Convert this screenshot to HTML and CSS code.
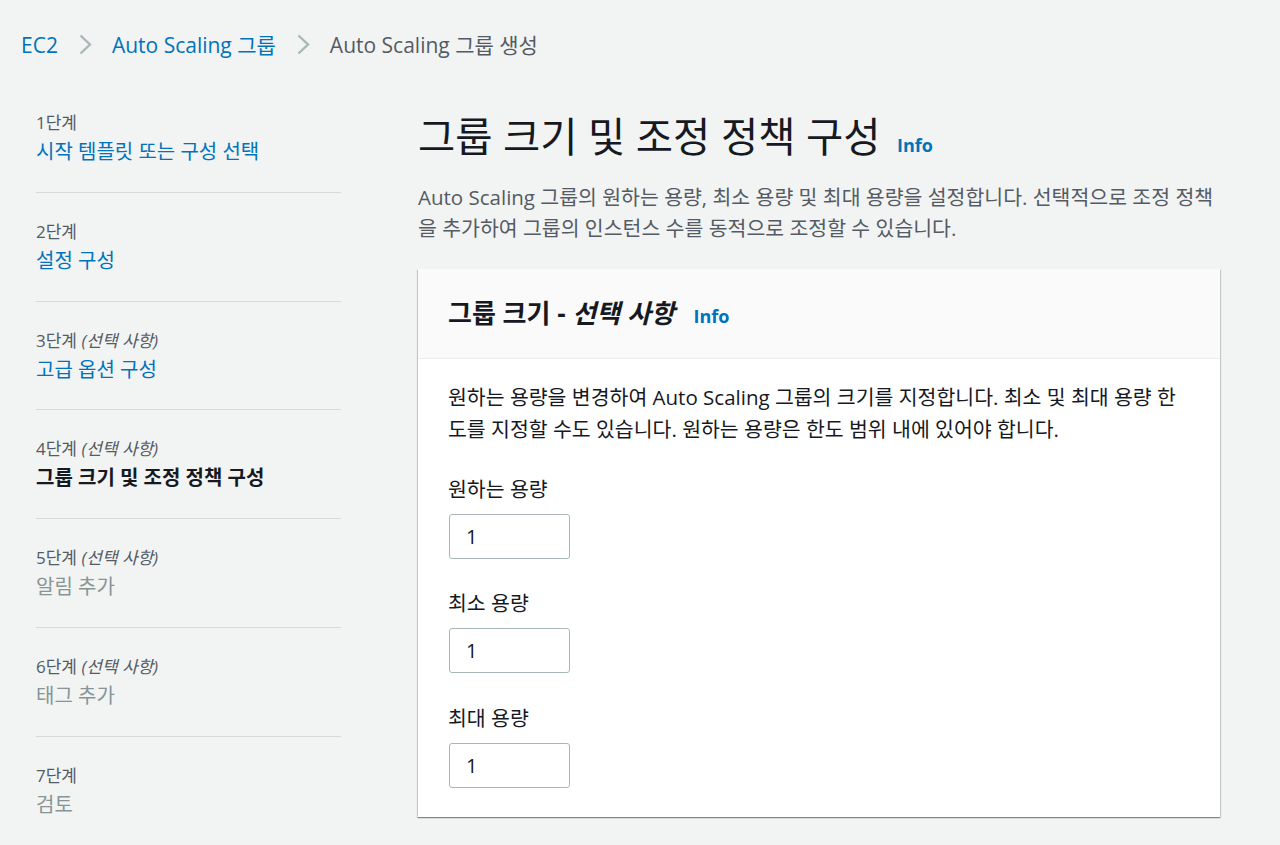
FILE: index.html
```html
<!DOCTYPE html>
<html lang="ko">
<head>
<meta charset="utf-8">
<title>그룹 크기 및 조정 정책 구성</title>
<link rel="stylesheet" href="styles.css">
</head>
<body>
<nav class="breadcrumb">
  <a class="crumb-link" href="#">EC2</a>
  <svg class="chev" viewBox="0 0 13 21" width="13" height="21"><path d="M1.5 1.5 L11 10.5 L1.5 19.5" fill="none" stroke="#aab7b8" stroke-width="2.4"/></svg>
  <a class="crumb-link" href="#">Auto Scaling 그룹</a>
  <svg class="chev" viewBox="0 0 13 21" width="13" height="21"><path d="M1.5 1.5 L11 10.5 L1.5 19.5" fill="none" stroke="#aab7b8" stroke-width="2.4"/></svg>
  <span class="crumb-current">Auto Scaling 그룹 생성</span>
</nav>

<div class="layout">
  <ul class="steps">
    <li class="step">
      <div class="step-label">1단계</div>
      <a class="step-link" href="#">시작 템플릿 또는 구성 선택</a>
    </li>
    <li class="step">
      <div class="step-label">2단계</div>
      <a class="step-link" href="#">설정 구성</a>
    </li>
    <li class="step">
      <div class="step-label">3단계 <i>(선택 사항)</i></div>
      <a class="step-link" href="#">고급 옵션 구성</a>
    </li>
    <li class="step">
      <div class="step-label">4단계 <i>(선택 사항)</i></div>
      <span class="step-current">그룹 크기 및 조정 정책 구성</span>
    </li>
    <li class="step">
      <div class="step-label">5단계 <i>(선택 사항)</i></div>
      <span class="step-disabled">알림 추가</span>
    </li>
    <li class="step">
      <div class="step-label">6단계 <i>(선택 사항)</i></div>
      <span class="step-disabled">태그 추가</span>
    </li>
    <li class="step">
      <div class="step-label">7단계</div>
      <span class="step-disabled">검토</span>
    </li>
  </ul>

  <main class="main">
    <h1 class="page-title">그룹 크기 및 조정 정책 구성 <a class="info info-lg" href="#">Info</a></h1>
    <p class="page-desc">Auto Scaling 그룹의 원하는 용량, 최소 용량 및 최대 용량을 설정합니다. 선택적으로 조정 정책을 추가하여 그룹의 인스턴스 수를 동적으로 조정할 수 있습니다.</p>

    <section class="card">
      <header class="card-header">
        <h2 class="card-title">그룹 크기 - <i>선택 사항</i> <a class="info" href="#">Info</a></h2>
      </header>
      <div class="card-body">
        <p class="card-desc">원하는 용량을 변경하여 Auto Scaling 그룹의 크기를 지정합니다. 최소 및 최대 용량 한도를 지정할 수도 있습니다. 원하는 용량은 한도 범위 내에 있어야 합니다.</p>
        <div class="field">
          <label class="field-label">원하는 용량</label>
          <input class="field-input" type="text" value="1">
        </div>
        <div class="field">
          <label class="field-label">최소 용량</label>
          <input class="field-input" type="text" value="1">
        </div>
        <div class="field">
          <label class="field-label">최대 용량</label>
          <input class="field-input" type="text" value="1">
        </div>
      </div>
    </section>
  </main>
</div>
</body>
</html>
```

FILE: styles.css
```css
* { box-sizing: border-box; }

html, body {
  margin: 0;
  padding: 0;
  background: #f2f3f3;
  font-family: "Open Sans", "Noto Sans CJK KR", sans-serif;
  color: #16191f;
}

a { text-decoration: none; }

.breadcrumb {
  display: flex;
  align-items: center;
  padding: 32px 0 0 21px;
  height: 57px;
  font-size: 21px;
  line-height: 26px;
}

.crumb-link { color: #0073bb; }
.crumb-current { color: #545b64; }
.chev { margin: 0 20px 0 21px; flex: none; }

.layout {
  display: flex;
  padding: 27px 0 0 36px;
}

.steps {
  list-style: none;
  margin: 0;
  padding: 0;
  width: 305px;
  flex: none;
}

.step {
  padding: 28px 0 25px;
  border-bottom: 1px solid #d5dbdb;
}
.step:last-child { border-bottom: none; }

.step-label {
  font-size: 17px;
  line-height: 22px;
  color: #545b64;
}
.step-label i { font-style: italic; }

.step-link, .step-current, .step-disabled {
  display: block;
  margin-top: 4px;
  font-size: 20px;
  line-height: 28.8px;
}
.step-link { color: #0073bb; }
.step-current { color: #16191f; font-weight: 700; }
.step-disabled { color: #879596; }

.main {
  margin-left: 77px;
  width: 802px;
  flex: none;
}

.page-title {
  margin: 29px 0 0;
  font-size: 40.5px;
  line-height: 48px;
  font-weight: 400;
  color: #16191f;
}

.info {
  color: #0073bb;
  font-weight: 700;
  font-size: 18px;
  vertical-align: middle;
  margin-left: 12px;
}
.info-lg { position: relative; top: 4px; margin-left: 6px; }

.page-desc {
  margin: 17px 0 0;
  font-size: 20.5px;
  line-height: 31px;
  color: #545b64;
}

.card {
  margin-top: 25px;
  background: #fff;
  box-shadow: 0 1px 1px 0 rgba(0, 28, 36, 0.3), 1px 1px 1px 0 rgba(0, 28, 36, 0.15), -1px 1px 1px 0 rgba(0, 28, 36, 0.15);
}

.card-header {
  background: #fafafa;
  padding: 28px 30px 26px;
  border-bottom: 1px solid #eaeded;
}

.card-title {
  margin: 0;
  font-size: 26px;
  line-height: 32px;
  font-weight: 700;
  color: #16191f;
}

.card-body {
  padding: 22px 30px 29px;
}

.card-desc {
  margin: 0;
  font-size: 20.5px;
  line-height: 32px;
  color: #16191f;
}

.field { margin-top: 31px; }
.field + .field { margin-top: 31px; }
.field:last-child { margin-top: 32px; }

.field-label {
  display: block;
  font-size: 20.5px;
  line-height: 26px;
  margin-bottom: 12px;
  color: #16191f;
}

.field-input {
  display: block;
  width: 121px;
  height: 45px;
  margin-left: 1px;
  padding: 0 16px;
  border: 1px solid #aab7b8;
  border-radius: 3px;
  background: #fff;
  font-family: "Open Sans", "Noto Sans CJK KR", sans-serif;
  font-size: 20px;
  color: #16191f;
}
```
